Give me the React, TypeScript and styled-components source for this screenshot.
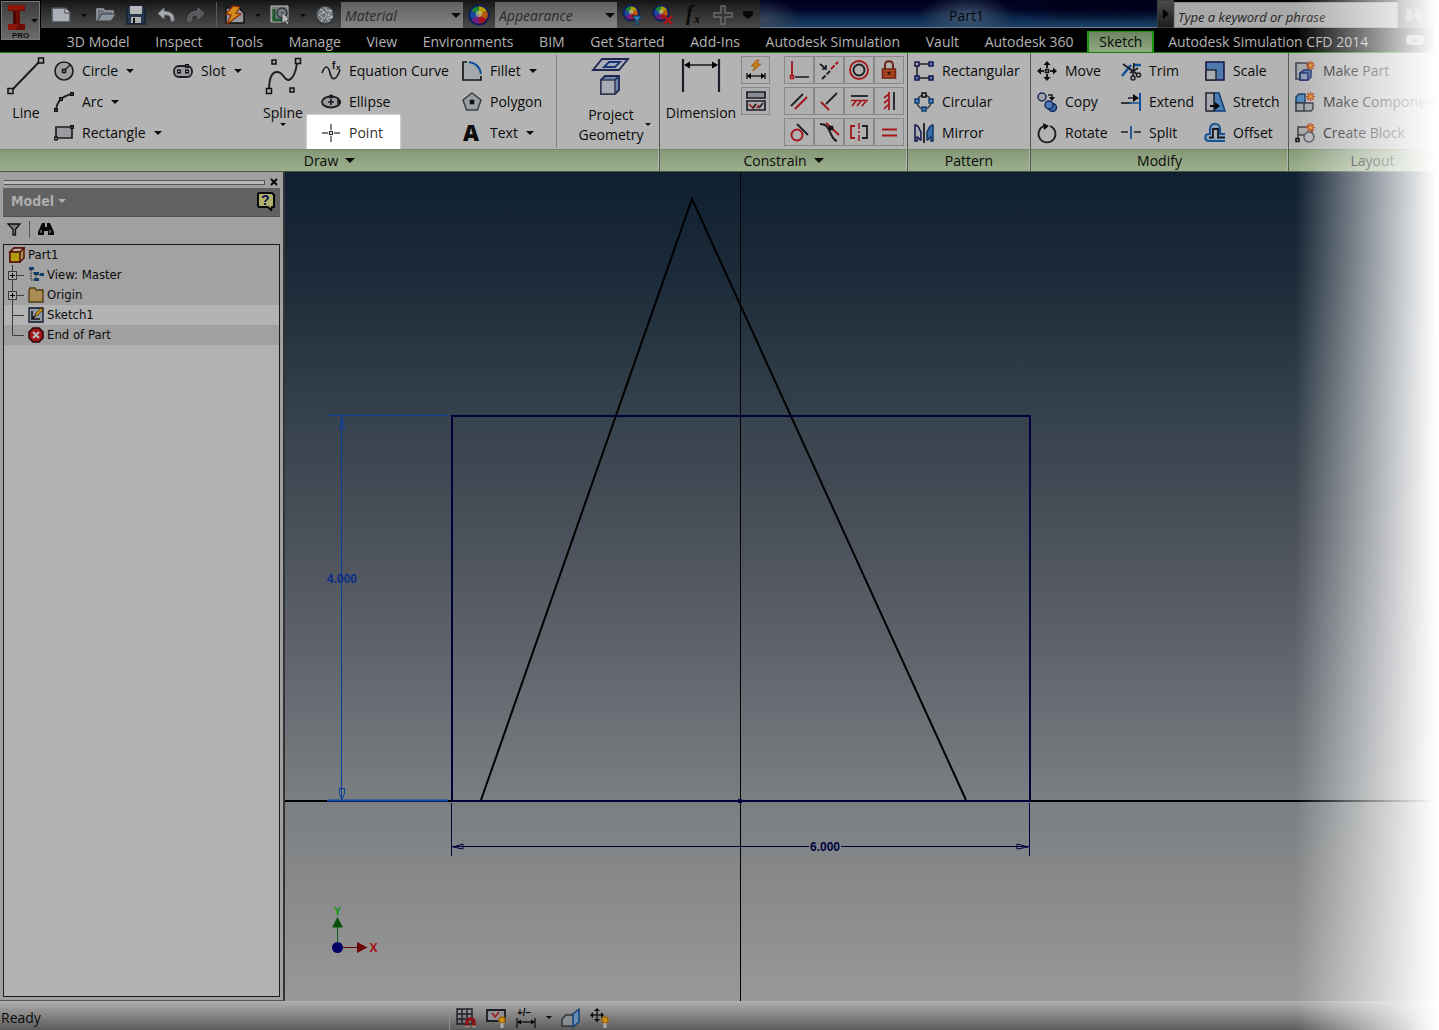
import React from 'react';
import styled, { createGlobalStyle, css } from 'styled-components';

const ui = '"Open Sans", "Noto Sans", sans-serif';
const treeFont = '"DejaVu Sans Condensed", "DejaVu Sans", sans-serif';

const c = {
  ink: '#0a0a0a',
  line: '#1c1f26',
  navy: '#14144a',
  blue: '#0f4f96',
  red: '#a3161a',
  ribbon: '#b3b3b3',
};

const Global = createGlobalStyle`
  *, *::before, *::after { box-sizing: border-box; }
  body { margin: 0; background: #fff; font-family: ${ui}; font-size: 14px; color: ${c.ink}; overflow: hidden; }
  button, input, select { font: inherit; color: inherit; margin: 0; }
  button { padding: 0; border: 0; background: none; }
  svg { display: block; flex: none; }
`;

const Shell = styled.div`
  position: relative;
  display: flex;
  flex-direction: column;
  height: 100vh;
  overflow: hidden;
`;

const EdgeFade = styled.div`
  position: absolute;
  inset: 0 0 0 auto;
  width: 144px;
  background: linear-gradient(to right, rgba(255, 255, 255, 0), #fff 98%);
  pointer-events: none;
`;

/* ---------- title bar and tabs ---------- */

const Header = styled.header`
  flex: none;
  display: grid;
  grid-template-columns: 41px minmax(0, 1fr);
  grid-template-rows: 29px 23px;
  background: #000;
  border-bottom: 1px solid #157a06;
`;

const AppButton = styled.button`
  grid-row: 1 / 3;
  width: 39px;
  height: 39px;
  margin: 1px;
  display: flex;
  align-items: center;
  border: 1px solid #777;
  background: linear-gradient(#3c3c3c, #6c6c6c);
`;

const TitleRow = styled.div`
  display: flex;
  min-width: 0;
  height: 28px;
`;

const QuickBar = styled.div`
  flex: none;
  display: flex;
  align-items: center;
  gap: 10px;
  padding: 2px 7px 0 10px;
  background: linear-gradient(#141414, #2b2b2b 35%, #494949);
`;

const QuickButton = styled.button`
  display: flex;
  align-items: center;
  justify-content: center;
  width: 20px;
  height: 24px;
`;

const CaretButton = styled.button`
  display: flex;
  align-items: center;
  justify-content: center;
  width: 25px;
  height: 24px;
  margin: 0 -10px;
`;

const MoreButton = styled(QuickButton)`
  width: 10px;
`;

const QuickRule = styled.span`
  width: 1px;
  height: 26px;
  margin-right: -2px;
  background: #5a5a5a;
`;

const StyleSelect = styled.span`
  display: flex;
  align-items: center;
  width: 122px;
  height: 26px;
  margin: 0 -4px;
  padding-right: 2px;
  background: linear-gradient(#606060, #858585);

  select {
    flex: 1;
    min-width: 0;
    height: 26px;
    padding: 0 4px;
    border: 0;
    background: none;
    appearance: none;
    font-style: italic;
    color: #2b2b2b;
  }
`;

const TitleArea = styled.div`
  flex: 1;
  min-width: 0;
  display: flex;
  align-items: center;
  justify-content: center;
  padding: 3px 0 0 16px;
  border-bottom: 1px solid #6d7f92;
  color: #05070b;
  background:
    radial-gradient(ellipse 48px 22px at 52% 60%, rgba(70, 95, 118, 0.85), rgba(70, 95, 118, 0)),
    radial-gradient(ellipse 36px 22px at 1% 75%, rgba(62, 72, 90, 0.9), rgba(62, 72, 90, 0)),
    radial-gradient(ellipse 110px 18px at 86% 20%, rgba(0, 0, 24, 0.9), rgba(0, 0, 24, 0)),
    linear-gradient(#00001c, #010528 35%, #0a2347 62%, #1c4166);
`;

const SearchToggle = styled.button`
  width: 17px;
  height: 28px;
  display: flex;
  align-items: center;
  justify-content: center;
  border: 1px solid #3d3d3d;
  background: linear-gradient(#4a4a4a, #1d1d1d);
`;

const SearchBox = styled.input`
  width: 224px;
  height: 26px;
  margin-top: 2px;
  padding: 3px 3px 0;
  border: 1px solid #8b8b8b;
  border-radius: 0;
  background: #a9a9a9;
  font-size: 13px;
  font-style: italic;

  &::placeholder { color: #222; opacity: 1; }
`;

const SearchButton = styled.button`
  width: 41px;
  height: 28px;
  display: flex;
  align-items: center;
  padding-left: 6px;
  background: #444;
`;

const TabRow = styled.nav`
  display: flex;
  justify-content: space-between;
  height: 23px;
  padding: 2px 15px 0 13px;
`;

const Tabs = styled.div`
  flex: 1 1 0;
  min-width: 0;
  max-width: 1327px;
  display: flex;
`;

const Tab = styled.button<{ $active?: boolean }>`
  flex: 1 0 auto;
  height: 21px;
  padding: 0 12px;
  line-height: 20px;
  white-space: nowrap;
  color: #b3b3b3;
  ${(p) => p.$active && css`
    margin: 0 1px;
    padding: 0 9px;
    line-height: 18px;
    color: #080808;
    border: 1px solid #13980a;
    border-width: 1px 2px 0;
    background: linear-gradient(#6b8560, #93ab84);
  `}
`;

const RibbonToggle = styled.button`
  margin-top: 4px;
  width: 18px;
  height: 10px;
  display: flex;
  align-items: center;
  justify-content: center;
  border-radius: 4px;
  background: #9b9b9b;
`;

/* ---------- ribbon ---------- */

const Ribbon = styled.div`
  flex: none;
  display: flex;
  height: 119px;
  overflow: hidden;
  background: ${c.ribbon};
  border-bottom: 1px solid #4b5544;
`;

const Panel = styled.section<{ $w?: number }>`
  flex: ${(p) => (p.$w ? `0 0 ${p.$w}px` : '1 0 168px')};
  display: flex;
  flex-direction: column;
  border-right: 1px solid #525c4c;
`;

const PanelBody = styled.div<{ $cols: string }>`
  display: grid;
  grid-template-columns: ${(p) => p.$cols};
  height: 96px;
  padding: 2px 0 0 6px;
`;

const PanelTitle = styled.h2`
  display: flex;
  align-items: center;
  justify-content: center;
  gap: 7px;
  height: 22px;
  margin: 0 1px 0 0;
  padding-left: 1px;
  border-top: 1px solid #78896c;
  background: linear-gradient(#859978, #9cb08d);
  font-size: 14px;
  font-weight: 400;
  line-height: 20px;
`;

const ToolColumn = styled.div`
  display: flex;
  flex-direction: column;
  align-items: flex-start;
  min-width: 0;
`;

const Tool = styled.button<{ $lit?: boolean }>`
  flex: none;
  display: flex;
  align-items: center;
  gap: 8px;
  height: 31px;
  line-height: 20px;
  white-space: nowrap;
  ${(p) => p.$lit && css`
    height: 35px;
    margin: -2px 0 0 -14px;
    padding: 2px 17px 2px 14px;
    background: #fff;
    box-shadow: 0 0 2px #fff;
    color: #303030;
  `}
`;

const BigTool = styled.button<{ $after?: number }>`
  position: relative;
  display: flex;
  flex-direction: column;
  align-items: center;
  height: 93px;
  margin-right: ${(p) => p.$after ?? 0}px;
  padding-top: 2px;
  line-height: 20px;
  white-space: pre;

  > span { margin-top: 8px; }
`;

const GeometryTool = styled(BigTool)`
  border-left: 1px solid #858585;
  padding-left: 6px;

  > svg:last-child { position: absolute; right: 8px; top: 68px; }
`;

const SideColumn = styled.div`
  display: flex;
  flex-direction: column;
  gap: 3px;
  padding-top: 1px;
`;

const Constraints = styled.div`
  display: grid;
  grid-template-columns: repeat(4, 30px);
  grid-auto-rows: 28px;
  row-gap: 3px;
  padding-top: 1px;
`;

const Cell = styled.button`
  display: flex;
  align-items: center;
  justify-content: center;
  height: 28px;
  width: 29px;
  border: 1px solid #888;
  background: #b0b0b0;
  ${Constraints} & { width: 30px; }
`;

/* ---------- work area ---------- */

const Work = styled.main`
  flex: 1;
  min-height: 0;
  display: flex;
`;

const Browser = styled.aside`
  flex: 0 0 285px;
  display: flex;
  flex-direction: column;
  padding: 4px 3px 3px;
  border-right: 2px solid #333;
  border-bottom: 1px solid #555;
  background: #a0a0a0;
  font-family: ${treeFont};
  font-size: 13px;
`;

const Grip = styled.div`
  display: flex;
  align-items: center;
  gap: 5px;
  height: 12px;

  > span {
    flex: 1;
    height: 5px;
    margin-left: 1px;
    border: solid #555;
    border-width: 1px 1px 1px 0;
    background: #b7b7b7;
  }
`;

const CloseButton = styled.button`
  width: 9px;
  height: 9px;
  margin-right: 1px;
`;

const BrowserHead = styled.div`
  display: flex;
  align-items: center;
  justify-content: space-between;
  height: 29px;
  padding: 0 5px 2px 8px;
  background: #616161;
  border-bottom: 1px solid #4f4f4f;
`;

const ModelMenu = styled.button`
  display: flex;
  align-items: center;
  gap: 4px;
  font-size: 14px;
  font-weight: 700;
  color: #aeaeae;
`;

const BrowserTools = styled.div`
  display: flex;
  align-items: center;
  gap: 8px;
  height: 27px;
  padding: 0 4px 3px;

  > span { width: 1px; height: 17px; background: #555; }
`;

const Tree = styled.ul`
  flex: 1;
  margin: 0;
  padding: 0;
  list-style: none;
  border: 1px solid #1a1a1a;
  background: #b1b1b1;
`;

const Row = styled.li<{ $tone: string; $root?: boolean }>`
  display: flex;
  align-items: center;
  gap: 3px;
  height: 20px;
  padding-left: ${(p) => (p.$root ? 5 : 3)}px;
  line-height: 20px;
  background: ${(p) => p.$tone};
`;

const Canvas = styled.div`
  flex: 1;
  min-width: 0;
  background: linear-gradient(#0f2031, #1b2a38 12%, #33404b 28%, #4b515a 44%, #62676f 60%, #7a7f82 76%, #8b8b8c 88%, #989897);

  > svg { width: 100%; height: 100%; }
`;

const StatusBar = styled.footer`
  flex: none;
  display: flex;
  align-items: center;
  height: 29px;
  padding-top: 3px;
  border-top: 1px solid #b0b0b0;
  background: linear-gradient(#ababab, #5b5b5b);
`;

const Ready = styled.span`
  width: 449px;
  padding-left: 1px;
`;

const StatusTools = styled.div`
  display: flex;
  align-items: center;
  gap: 10px;
  padding-left: 6px;
  border-left: 1px solid #8c8c8c;
`;

/* ---------- icons ---------- */

type G = { children: React.ReactNode; s?: number; h?: number };
const Svg = ({ children, s = 20, h }: G) => (
  <svg width={s} height={h ?? s} viewBox={`0 0 ${s} ${h ?? s}`} overflow="visible" fill="none" stroke={c.line} strokeWidth="1.5" aria-hidden="true">
    {children}
  </svg>
);

const Down = ({ w = 8, fill = '#0b0b0b' }: { w?: number; fill?: string }) => (
  <svg width={w} height={Math.round(w / 2)} viewBox="0 0 8 4" preserveAspectRatio="none" aria-hidden="true">
    <path d="M0 0h8L4 4z" fill={fill} />
  </svg>
);

const Node = ({ x, y, fill = '#aaa', s = 4, stroke = '#101014' }: { x: number; y: number; fill?: string; s?: number; stroke?: string }) => (
  <rect x={x - s / 2} y={y - s / 2} width={s} height={s} fill={fill} stroke={stroke} strokeWidth="1.5" />
);

const Wheel = ({ x = 10, y = 10, r = 8 }) => {
  const hues = ['#b59a00', '#b8590a', '#a3141c', '#6e1f86', '#1b47a0', '#1c8430'];
  const at = (a: number) => `${x + r * Math.cos(a)} ${y + r * Math.sin(a)}`;
  return (
    <g stroke="none">
      {hues.map((h, i) => (
        <path key={h} fill={h} d={`M${x} ${y}L${at((i * Math.PI) / 3 - 1.57)}A${r} ${r} 0 0 1 ${at(((i + 1) * Math.PI) / 3 - 1.57)}z`} />
      ))}
      <circle cx={x} cy={y} r={r + 0.7} fill="none" stroke="#0c1e5c" strokeWidth="1.8" />
      <circle cx={x} cy={y - 1} r={r * 0.35} fill="#c9c69a" opacity=".6" />
    </g>
  );
};

const Spark = () => (
  <g stroke="#b8400e" strokeWidth="1.600">
    <path d="M15.500 0v9M11 4.500h9M12.300 1.300l6.400 6.400M18.700 1.300l-6.400 6.400" />
    <circle cx="15.500" cy="4.500" r="1.700" fill="#e0a23c" stroke="#c86a16" strokeWidth="1" />
  </g>
);

const Logo = () => (
  <svg width="37" height="37" viewBox="0 0 37 37" aria-hidden="true">
    <path d="M6 3h17v6h-5v13h5v6H6v-6h5V9H6z" fill="#6a0d05" />
    <path d="M6 3h17l-2 5H6z" fill="#8c1609" />
    <path d="M11 9h3v13h-3z" fill="#4c0703" />
    <path d="M6 22h10l-3 6H6z" fill="#8c1609" />
    <text x="10" y="36" fontFamily="Liberation Sans" fontWeight="700" fontSize="8" fill="#101010">PRO</text>
    <path d="M29 17h7l-3.500 3.500z" fill="#050505" />
  </svg>
);

const I: Record<string, React.ReactNode> = {
  newFile: <Svg><path d="M1 3h13l5 5v9H1z" fill="#aab0b6" stroke="#4a4e54" /><path d="M14 3v5h5" fill="#d0d0d0" stroke="#666" /></Svg>,
  open: <Svg><path d="M1 16V4h6l2 2h8v3" fill="#6a7280" stroke="#9aa0a8" /><path d="M1 16l5-7h14l-5 7z" fill="#8b929b" stroke="#3a3e46" strokeWidth="1" /></Svg>,
  save: <Svg><path d="M1 1h18v18H1z" fill="#27384f" stroke="#18202c" /><path d="M4 1h12v8H4z" fill="#b7b7b7" stroke="none" /><path d="M5 12h10v6H5z" fill="#b0b0b0" stroke="none" /><path d="M7 13h2v5H7z" fill="#111" stroke="none" /></Svg>,
  undo: <Svg><path d="M8 3L2 8.500 8 14v-4c5-.5 7 1 7 6h3c.5-7-3-9.500-10-9.500z" fill="#a8acb2" stroke="#7b7f85" strokeWidth="1" /></Svg>,
  redo: <Svg><path d="M12 3l6 5.500L12 14v-4c-5-.5-7 1-7 6H2C1.500 9 5 6.500 12 6.500z" fill="#55585c" stroke="#6c6f73" strokeWidth="1" /></Svg>,
  update: <Svg><path d="M1 3h13l5 5v10H1z" fill="#94989c" stroke="#111" /><path d="M8 1L1 9l5 1-4 9L16 9l-5-1 4-6z" fill="#d08a1a" stroke="#8c2a08" strokeWidth="1.200" /></Svg>,
  pick: <Svg><path d="M1 1h17v16H1z" fill="#777c80" stroke="#bbb" strokeWidth="1" /><path d="M4 4v11h9" stroke="#1b5a28" strokeWidth="3" /><circle cx="12" cy="8" r="5" stroke="#2d3540" /><path d="M12 7v12l3-3 2 4 2-1-2-4h3z" fill="#bbb" stroke="#222" strokeWidth=".8" /></Svg>,
  sphere: <Svg><circle cx="10" cy="10" r="9" fill="#6f7478" stroke="#31363a" /><path d="M5 4l4 3-5 3 4 3-2 4M10 2l2 4 5-1-4 5 5 2-6 1 2 4M9 7l3 3-3 4" stroke="#babec0" strokeWidth="1" /></Svg>,
  wheel: <Svg><Wheel r={9} /></Svg>,
  wheelDown: <Svg><Wheel x={8} y={8} r={7} /><path d="M9 11h10l-4 4v5h-2v-5z" fill="#2c81b8" stroke="#0d3558" strokeWidth="1" /></Svg>,
  wheelX: <Svg><Wheel x={8} y={8} r={7} /><path d="M11 11l8 8M19 11l-8 8" stroke="#ab1717" strokeWidth="2.400" /></Svg>,
  fx: <Svg><text x="3" y="15" fontFamily="Liberation Serif" fontStyle="italic" fontWeight="700" fontSize="20" fill="#080808" stroke="none">f</text><text x="11" y="18" fontFamily="Liberation Serif" fontStyle="italic" fontWeight="700" fontSize="12" fill="#080808" stroke="none">x</text></Svg>,
  plus: <Svg><path d="M8 1h4v7h7v4h-7v7H8v-7H1V8h7z" stroke="#6b6b6b" fill="#333" /></Svg>,
  more: <Svg s={10} h={10}><path d="M0 1h10v4L5 9 0 5z" fill="#070707" stroke="none" /></Svg>,
  binoc: <Svg><path d="M3 5h5v5h3V5h5l3 12h-7v-4H8v4H1z" fill="#888" stroke="#666" /></Svg>,

  line: <Svg s={38}><path d="M5 33L33 4" strokeWidth="2" /><Node x={3.500} y={34} s={5} /><Node x={34} y={3.500} s={5} /></Svg>,
  circle: <Svg><circle cx="10" cy="10" r="9" fill="#a0a0a0" strokeWidth="1.700" /><path d="M10 10l6-6" strokeWidth="1.200" /><Node x={10} y={10} s={3} /></Svg>,
  arc: <Svg><path d="M2 18C3 9 8 4 18 2" strokeWidth="1.800" /><Node x={2} y={18} s={2.500} /><Node x={7} y={7} s={2.500} /><Node x={18} y={2} s={2.500} /></Svg>,
  rect: <Svg><path d="M2 4h16v11H2z" fill="#999b9f" strokeWidth="1.700" /><Node x={2} y={15.500} s={2.500} /><Node x={18} y={4} s={2.500} /></Svg>,
  slot: <Svg><rect x="1" y="5" width="18" height="11" rx="5" fill="#999b9f" strokeWidth="1.800" /><Node x={6} y={10.500} s={2.500} /><Node x={14} y={10.500} s={2.500} /><Node x={14} y={5} s={2.500} /></Svg>,
  spline: <Svg s={38}><path d="M5 34C5 24 7 15 13 15c7 0 7 9 12 8 5-2 7-9 8-17" strokeWidth="2" /><Node x={5} y={34} s={5} /><Node x={10} y={5} s={4} /><Node x={28} y={33} s={4} /><Node x={34} y={4} s={5} /></Svg>,
  equation: <Svg><path d="M1 12c3-8 6-8 8 0s6 8 10-3" strokeWidth="1.700" /><text x="11" y="8" fontFamily="Liberation Sans" fontWeight="700" fontSize="10" fill="#111" stroke="none">f</text><text x="15" y="9" fontFamily="Liberation Sans" fontWeight="700" fontSize="8" fill="#111" stroke="none">x</text></Svg>,
  ellipse: <Svg><ellipse cx="10" cy="10" rx="9" ry="5.500" fill="#a0a0a0" strokeWidth="1.900" /><path d="M10 7v6M7 10h6" strokeWidth="1.700" /><Node x={10} y={4.500} s={2} /><Node x={18} y={10} s={2} /></Svg>,
  point: <Svg><path d="M10 1v6M10 13v6M1 10h6M13 10h6" stroke="#555" strokeWidth="1.400" /><rect x="8.500" y="8.500" width="3" height="3" stroke="#333" strokeWidth="1.200" /></Svg>,
  fillet: <Svg><path d="M1 1h6c8 1 11 5 12 12v6H1z" fill="#a5a9ae" stroke="none" /><path d="M5 1H1v18h18v-4" stroke="#15171c" strokeWidth="1.700" /><path d="M7 1c7 1 11 5 12 12" stroke="#0d4f9a" strokeWidth="2" /></Svg>,
  polygon: <Svg><path d="M10 1l9 7-3.500 10h-11L1 8z" fill="#9b9ea2" stroke="#3d4046" /><Node x={10} y={10} s={3} fill="#111" /></Svg>,
  text: <Svg><text x="1" y="18" fontFamily="Open Sans" fontWeight="800" fontSize="22" fill="#0c0c0c" stroke="none">A</text></Svg>,
  project: <Svg s={40}><path d="M11 2h26l-9 11H2z" fill="#a9adb5" stroke="#1e2552" strokeWidth="1.800" /><path d="M18 5h11l-5 5H13z" fill="#a3acbd" stroke="#1c3272" strokeWidth="1.800" /><path d="M10 23l4-4h14v14l-4 4H10z" fill="#6f87ab" stroke="#1e2552" strokeWidth="1.800" /><path d="M10 23h14v14H10z" fill="#a9adb3" stroke="#333b55" /><path d="M24 23l4-4" stroke="#1e2552" /></Svg>,

  dimension: <Svg s={40} h={38}><path d="M2 2v33M38 2v33" stroke="#1b2028" strokeWidth="2.200" /><path d="M4 8h32" strokeWidth="1.600" /><path d="M3 8l6-3.500v7zM37 8l-6-3.500v7z" fill="#000" stroke="none" /></Svg>,
  autoDim: <Svg><path d="M11 0L5 6h4l-2 5 8-7h-4l2-4z" fill="#c98312" stroke="#a44b07" strokeWidth=".8" /><path d="M1 13v6M19 13v6M2 16h16" /><path d="M1 16l4-3v6zM19 16l-4-3v6z" fill="#000" stroke="none" /></Svg>,
  showCon: <Svg><path d="M1 1h18v6H1z" fill="#888d93" strokeWidth="1.700" /><path d="M1 10h18v9H1z" fill="#a9a9a9" strokeWidth="1.700" /><path d="M3 13l4 4 3-4" stroke={c.red} /><path d="M7 17l3-4M13 17l4-5" strokeWidth="1.600" /><path d="M11 17l2-3" stroke={c.red} /></Svg>,
  coincident: <Svg><path d="M3 1v14" stroke={c.red} strokeWidth="1.800" /><path d="M6 17h14" strokeWidth="1.600" /><rect x="1.500" y="15.500" width="3" height="3" stroke={c.red} fill="#c88" /></Svg>,
  collinear: <Svg><path d="M3 19l8-8" strokeWidth="2" strokeDasharray="5 1.500" /><path d="M12 9l7-7" stroke={c.red} strokeWidth="2" strokeDasharray="5 1.500" /><path d="M1 4l6 5M7 5v4H3" strokeWidth="1.700" /></Svg>,
  concentric: <Svg><circle cx="10" cy="10" r="9" stroke={c.red} strokeWidth="1.900" /><circle cx="10" cy="10" r="5.500" strokeWidth="1.900" /></Svg>,
  lock: <Svg><path d="M6 9V5c0-5 8-5 8 0v4" stroke="#6c2414" strokeWidth="2" /><path d="M3.500 9h13v9h-13z" fill="#b14d28" stroke="#70210e" /><path d="M4 12h12M4 15h12" stroke="#7d2c13" strokeWidth="1" /><circle cx="10" cy="13" r="1.500" fill="#3a0d04" stroke="none" /></Svg>,
  parallel: <Svg><path d="M2 15L14 3" strokeWidth="1.800" /><path d="M6 18L18 6" stroke={c.red} strokeWidth="2" /></Svg>,
  perp: <Svg><path d="M7 13L18 2" strokeWidth="1.800" /><path d="M2 11l8 8" stroke={c.red} strokeWidth="2" /></Svg>,
  horizontal: <Svg><path d="M2 5h17" strokeWidth="1.800" /><path d="M2 9.500h17M7 10l-4 5M12 10l-4 5M17 10l-4 5" stroke={c.red} strokeWidth="1.700" /></Svg>,
  vertical: <Svg><path d="M15 1v18" strokeWidth="1.800" /><path d="M10 1v18M10 3l-5 4M10 8l-5 4M10 13l-5 5" stroke={c.red} strokeWidth="1.700" /></Svg>,
  tangent: <Svg><circle cx="8" cy="13" r="5.500" stroke={c.red} strokeWidth="2" /><path d="M8 2l11 11" strokeWidth="1.800" /></Svg>,
  smooth: <Svg><path d="M1 2c7 0 8 4 10 8s3 8 7 9" strokeWidth="2" /><path d="M7 1l13 12" stroke={c.red} strokeWidth="2" /><Node x={12} y={6} s={3} fill="#222" /></Svg>,
  symmetric: <Svg><path d="M6 4H2v12h4" stroke={c.red} strokeWidth="1.800" /><path d="M13 4h5v12h-5" strokeWidth="1.800" /><path d="M10 1v18" stroke={c.red} strokeDasharray="6 2 2 2" /></Svg>,
  equal: <Svg><path d="M3 7.500h15M3 13.500h15" stroke={c.red} strokeWidth="1.800" /></Svg>,

  rectangular: <Svg><path d="M3 3h14M3 3v14h14" /><Node x={3} y={3} s={4} stroke={c.navy} />{[[17, 3], [3, 17], [17, 17]].map(([x, y]) => <Node key={`${x}-${y}`} x={x} y={y} s={4} stroke={c.navy} fill="#547db1" />)}</Svg>,
  circular: <Svg><circle cx="10" cy="10" r="7" strokeWidth="1.200" /><Node x={10} y={3} s={4} />{[[3, 9], [17, 9], [10, 17]].map(([x, y]) => <Node key={`${x}-${y}`} x={x} y={y} s={4} stroke="#153f73" fill="#4a80b8" />)}</Svg>,
  mirror: <Svg><path d="M1 18V2c4 0 4 4 6 7v8c-2 0-2-3-4-3v4z" fill="#a9abb0" stroke={c.navy} /><path d="M19 18V2c-4 0-4 4-6 7v8c2 0 2-3 4-3v4z" fill="#346eae" stroke="#153564" /><path d="M10 0v20" stroke="#08080c" strokeWidth="1.600" /></Svg>,
  move: <Svg><path d="M10 2v5M10 13v5M2 10h5M13 10h5" strokeWidth="2" /><path d="M10 0l3.500 4h-7zM10 20l3.500-4h-7zM0 10l4-3.500v7zM20 10l-4-3.500v7z" fill="#0b0b0b" stroke="none" /><Node x={10} y={10} s={3} /></Svg>,
  copy: <Svg><circle cx="5" cy="5" r="4" fill="#a0a4aa" stroke="#1b2857" /><circle cx="15.500" cy="15.500" r="4" fill="#3e6cab" stroke="#142860" /><circle cx="12" cy="13" r="4" fill="#4f7db8" stroke="#142860" /><path d="M11 3h4v3" /><path d="M12 5h6l-3 4z" fill="#0a0a0a" stroke="none" /></Svg>,
  rotate: <Svg><path d="M13 3a8.500 8.500 0 1 1-6 0" strokeWidth="1.800" /><path d="M6 0l6 3-5 4z" fill="#090909" stroke="none" /></Svg>,
  trim: <Svg><path d="M1 15L10 4M13 4h7" stroke={c.blue} strokeWidth="2.400" /><path d="M2 3l14 10M17 7L9 12" strokeWidth="1.900" /><circle cx="17.500" cy="14" r="2" /><circle cx="12" cy="17" r="2" /><path d="M12 15l1-13" stroke={c.line} strokeWidth="1.700" /></Svg>,
  extend: <Svg><path d="M0 11h10" strokeWidth="1.700" /><path d="M8 11h10" stroke={c.blue} /><path d="M19 1v18" stroke={c.blue} strokeWidth="2" /><path d="M7 6h6" /><path d="M12 2l6 4-6 4z" fill="#0a0a0a" stroke="none" /></Svg>,
  split: <Svg><path d="M0 9h7M13 9h7" strokeWidth="1.700" /><path d="M10 3v13" stroke={c.blue} strokeWidth="1.700" /></Svg>,
  scale: <Svg><path d="M1 1h18v18H1z" fill="#4f78ac" stroke={c.navy} /><path d="M1 9h10v10H1z" fill="#aaadb2" stroke="#23272f" /></Svg>,
  stretch: <Svg><path d="M9 1h5l6 18H9z" fill="#4a7fb8" stroke="#153f78" /><path d="M1 1h8v18H1z" fill="#a4a8ae" stroke="#20242c" /><path d="M5 14h6" stroke="#060606" strokeWidth="2" /><path d="M10 10l5 4-5 4z" fill="#060606" stroke="none" /></Svg>,
  offset: <Svg><path d="M20 18H4c-5 0-5-7 0-7h1V6c0-7 10-7 10 0v5h5" stroke="#1a5592" strokeWidth="2.200" fill="#8fa4bd" /><path d="M20 14.500h-7V6H8v8.500H4" stroke="#16181e" strokeWidth="1.800" fill="#b0b0b0" /></Svg>,
  part: <Svg><path d="M1 2h12v16H1z" fill="#a2a4a8" stroke="#3b3e48" /><path d="M5 12l4-3h7v7l-3 3H5z" fill="#56749e" stroke="#1b2c68" /><path d="M5 12h8v7H5z" fill="#8798b4" stroke="#1b2c68" /><Spark /></Svg>,
  component: <Svg><path d="M1 5l3-3h6v9H1z" fill="#4b88b6" stroke="#1d3a5c" /><path d="M1 11h8v8H1zM9 11h9v6l-2 2H9z" fill="#9ea1a6" stroke="#31353f" /><Spark /></Svg>,
  block: <Svg><path d="M3 4h14v8H3zM3 12v5" stroke="#383b42" fill="#a6a6a6" /><Node x={2.500} y={17} s={3} /><circle cx="14" cy="14" r="5" fill="#aeb0b3" stroke="#4b4e55" /><Spark /></Svg>,

  help: <Svg s={18}><path d="M2 1h13l2 2v12h-2l-1 3-3-3H2L1 14V2z" fill="#b3b169" stroke="#080808" strokeWidth="2" /><text x="4" y="13" fontFamily="Liberation Sans" fontWeight="700" fontSize="14" fill="#0a0a55" stroke="none">?</text></Svg>,
  filter: <Svg s={14}><path d="M1 2h12L8.500 7.500V13H6V7.500z" fill="#777" stroke="#111" strokeWidth="1.300" /></Svg>,
  find: <Svg s={16}><path d="M4 2h3v4h2V2h3l4 9v3h-6v-4H6v4H0v-3z" fill="#080808" stroke="none" /><path d="M3 9v3M12 9v3" stroke="#aaa" strokeWidth="1" /></Svg>,
  cube: <Svg s={16}><path d="M1 5l4-4h10v10l-4 4H1z" fill="#a6964d" stroke="#571009" /><path d="M5 1h10l-4 4H1z" fill="#b5b09a" stroke="#571009" /><path d="M1 5h10v10H1z" fill="#b49a11" stroke="#571009" /></Svg>,
  view: <Svg s={16}><path d="M3 3v10h3M5 6h3v7h3M11 8h4" strokeDasharray="1.500 1" strokeWidth="1" /><path d="M1 0h5v3H1zM6 5h5v3H6zM12 6h4v3h-4zM6 11h5v3H6z" fill="#123d69" stroke="none" /></Svg>,
  folder: <Svg s={16}><path d="M1 3l1-2h5l1 2h7v12H1z" fill="#a98c56" stroke="#513a12" strokeWidth="1.300" /></Svg>,
  sketch: <Svg s={16}><path d="M1 1h14v14H1z" fill="#909caa" stroke="#0e1424" strokeWidth="1.300" /><path d="M4 4v8h8M4 12l4-4" stroke="#111" strokeWidth="1.600" /><path d="M7 9l1-3 5-5 2 2-5 5z" fill="#c08a15" stroke="#5a3a08" strokeWidth=".8" /></Svg>,
  end: <Svg s={16}><path d="M5 1h6l4 4v6l-4 4H5l-4-4V5z" fill="#a3141c" stroke="#2b0506" /><path d="M5 5l6 6M11 5l-6 6" stroke="#b9b9b9" strokeWidth="2.200" /></Svg>,

  grid: <Svg><path d="M1 1h15v15H1zM6 1v15M11 1v15M1 6h15M1 11h15" strokeWidth="1.400" /><path d="M11 19v-5c0-4 7-4 7 0v5" stroke="#8d1515" strokeWidth="3.500" /><path d="M9 18.500h4M16 18.500h4" stroke="#999" /></Svg>,
  constraintLight: <Svg><path d="M1 2h18v11H1z" fill="#8f9195" strokeWidth="1.800" /><path d="M6 5l3 4 4-5" stroke={c.red} /><circle cx="16" cy="12" r="3" fill="#c49413" stroke="#a4620c" /><path d="M16 15v5" stroke="#aaa" strokeWidth="3" /></Svg>,
  tolerance: <Svg><text x="1" y="8" fontFamily="Liberation Sans" fontWeight="700" fontSize="10" fill="#0c0c0c" stroke="none">+/−</text><path d="M1 10v10M19 10v10M2 14h16" /><path d="M1 14l4-2.500v5zM19 14l-4-2.500v5z" fill="#000" stroke="none" /></Svg>,
  slice: <Svg><path d="M1 18V11l4-4h8v11z" fill="#8a8d92" stroke="#2e323a" /><path d="M12 19V6l6-5v13z" fill="#678cb4" stroke="#0f4478" /></Svg>,
  moveLight: <Svg><path d="M6 1v12M0 7h12" /><path d="M6 0l3 3H3zM6 14l3-3H3zM-1 7l3-3v6zM13 7l-3-3v6z" fill="#0a0a0a" stroke="none" /><circle cx="14" cy="12" r="3" fill="#c49413" stroke="#a4620c" /><path d="M14 15v5" stroke="#aaa" strokeWidth="3" /></Svg>,
};

const T = ({ icon, label, drop, lit }: { icon: string; label: string; drop?: boolean; lit?: boolean }) => (
  <Tool $lit={lit}>{I[icon]}{label}{drop && <Down />}</Tool>
);

const Quick = ({ icon, label }: { icon: string; label: string }) => (
  <QuickButton aria-label={label}>{I[icon]}</QuickButton>
);

const tabsBefore = ['3D Model', 'Inspect', 'Tools', 'Manage', 'View', 'Environments', 'BIM', 'Get Started', 'Add-Ins', 'Autodesk Simulation', 'Vault', 'Autodesk 360'];
const constraints = ['coincident', 'collinear', 'concentric', 'lock', 'parallel', 'perp', 'horizontal', 'vertical', 'tangent', 'smooth', 'symmetric', 'equal'];
const branches = [
  { label: 'View: Master', icon: 'view', tone: '#a2a2a2', plus: true },
  { label: 'Origin', icon: 'folder', tone: '#a2a2a2', plus: true },
  { label: 'Sketch1', icon: 'sketch', tone: '#b3b3b3' },
  { label: 'End of Part', icon: 'end', tone: '#a0a0a0', last: true },
];

const Branch = ({ plus, last }: { plus?: boolean; last?: boolean }) => (
  <svg width="18" height="20" viewBox="0 0 18 20" fill="none" stroke="#3c3c3c" aria-hidden="true">
    <path d={last ? 'M5.500 0v10.500H17' : 'M5.500 0v20M5.500 10.500H17'} />
    {plus && <><rect x="1.500" y="6.500" width="8" height="8" fill="#a8a8a8" /><path d="M3 10.500h5M5.500 8v5" stroke="#000" /></>}
  </svg>
);

const Drawing = () => (
  <svg role="img" aria-label="Part sketch">
    <path d="M0 629h5000" stroke="#000" strokeWidth="2" />
    <path d="M455.500 0v5000" stroke="#000" />
    <path d="M196 628L407 27l274 601" stroke="#000" strokeWidth="2" fill="none" />
    <path d="M167 244h578v385H167z" stroke="#00003c" strokeWidth="2" fill="none" />
    <path d="M453 627h4v4h-4z" fill="#00003c" />
    <g stroke="#0c3c9c" fill="none">
      <path d="M42 243.500h121M56.500 244v384" />
      <path d="M42 628.500h121" stroke="#1549a6" strokeWidth="2" />
      <path d="M57 245l-2.500 12h5zM54.500 616.500h5v5l-2.500 6-2.500-6z" />
    </g>
    <g stroke="#00003c" fill="none">
      <path d="M166.500 631v53M744.500 631v53M167 674.500h357M556 674.500h188" />
      <path d="M168 675l10-3v5zM743 675l-11-3v5z" />
    </g>
    <g fontFamily="Liberation Sans, sans-serif" fontSize="12" fontWeight="700" textAnchor="middle">
      <text x="57" y="411" fill="#0a2c86">4.000</text>
      <text x="540" y="679" fill="#00003f">6.000</text>
      <text x="52.500" y="743" fill="#0b9a12" fontSize="11">Y</text>
      <text x="88.500" y="780" fill="#a80f0f" fontSize="12">X</text>
    </g>
    <path d="M52.500 755v16" stroke="#0a5f10" />
    <path d="M52.500 745l5.500 10.500H47z" fill="#07500b" />
    <path d="M58 775.500h14" stroke="#6a0808" />
    <path d="M72 770l10.500 5.500L72 781z" fill="#6a0606" />
    <circle cx="52.500" cy="775.500" r="5.500" fill="#040468" />
  </svg>
);

export default function App() {
  return (
    <Shell>
      <Global />
      <Header>
        <AppButton aria-label="Application menu"><Logo /></AppButton>
        <TitleRow>
          <QuickBar>
            <Quick icon="newFile" label="New" />
            <CaretButton aria-label="New options"><Down w={6} fill="#080808" /></CaretButton>
            <Quick icon="open" label="Open" />
            <Quick icon="save" label="Save" />
            <Quick icon="undo" label="Undo" />
            <Quick icon="redo" label="Redo" />
            <QuickRule />
            <Quick icon="update" label="Update" />
            <CaretButton aria-label="Update options"><Down w={6} fill="#080808" /></CaretButton>
            <Quick icon="pick" label="Select" />
            <CaretButton aria-label="Select options"><Down w={6} fill="#080808" /></CaretButton>
            <Quick icon="sphere" label="Materials" />
            <StyleSelect>
              <select aria-label="Material"><option>Material</option></select>
              <Down w={10} />
            </StyleSelect>
            <Quick icon="wheel" label="Appearances" />
            <StyleSelect>
              <select aria-label="Appearance"><option>Appearance</option></select>
              <Down w={10} />
            </StyleSelect>
            <Quick icon="wheelDown" label="Adjust appearance" />
            <Quick icon="wheelX" label="Clear appearance" />
            <Quick icon="fx" label="Parameters" />
            <Quick icon="plus" label="Add" />
            <MoreButton aria-label="Customize">{I.more}</MoreButton>
          </QuickBar>
          <TitleArea>Part1</TitleArea>
          <SearchToggle aria-label="Toggle search">
            <Svg s={6} h={10}><path d="M0 0l6 5-6 5z" fill="#000" stroke="none" /></Svg>
          </SearchToggle>
          <SearchBox type="search" aria-label="Search" placeholder="Type a keyword or phrase" />
          <SearchButton aria-label="Find">{I.binoc}</SearchButton>
        </TitleRow>
        <TabRow>
          <Tabs>
            {tabsBefore.map((t) => <Tab key={t}>{t}</Tab>)}
            <Tab $active>Sketch</Tab>
            <Tab>Autodesk Simulation CFD 2014</Tab>
          </Tabs>
          <RibbonToggle aria-label="Minimize ribbon"><Svg s={8} h={4}><path d="M0 4h8L4 0z" fill="#444" stroke="none" /></Svg></RibbonToggle>
        </TabRow>
      </Header>

      <Ribbon>
        <Panel $w={660}>
          <PanelBody $cols="48px 119px 84px 64px 141px 94px minmax(0, 1fr)">
            <BigTool $after={8}>{I.line}<span>Line</span></BigTool>
            <ToolColumn>
              <T icon="circle" label="Circle" drop />
              <T icon="arc" label="Arc" drop />
              <T icon="rect" label="Rectangle" drop />
            </ToolColumn>
            <ToolColumn><T icon="slot" label="Slot" drop /></ToolColumn>
            <BigTool $after={12}>{I.spline}<span>Spline</span><Down w={6} /></BigTool>
            <ToolColumn>
              <T icon="equation" label="Equation Curve" />
              <T icon="ellipse" label="Ellipse" />
              <T icon="point" label="Point" lit />
            </ToolColumn>
            <ToolColumn>
              <T icon="fillet" label="Fillet" drop />
              <T icon="polygon" label="Polygon" />
              <T icon="text" label="Text" drop />
            </ToolColumn>
            <GeometryTool>{I.project}<span>{'Project\nGeometry'}</span><Down w={6} /></GeometryTool>
          </PanelBody>
          <PanelTitle>Draw <Down w={10} /></PanelTitle>
        </Panel>

        <Panel $w={248}>
          <PanelBody $cols="70px 5px 43px 120px">
            <BigTool>{I.dimension}<span>Dimension</span></BigTool>
            <span />
            <SideColumn>
              <Cell aria-label="Automatic dimensions">{I.autoDim}</Cell>
              <Cell aria-label="Show constraints">{I.showCon}</Cell>
            </SideColumn>
            <Constraints>
              {constraints.map((k) => <Cell key={k} aria-label={k}>{I[k]}</Cell>)}
            </Constraints>
          </PanelBody>
          <PanelTitle>Constrain <Down w={10} /></PanelTitle>
        </Panel>

        <Panel $w={123}>
          <PanelBody $cols="1fr">
            <ToolColumn>
              <T icon="rectangular" label="Rectangular" />
              <T icon="circular" label="Circular" />
              <T icon="mirror" label="Mirror" />
            </ToolColumn>
          </PanelBody>
          <PanelTitle>Pattern</PanelTitle>
        </Panel>

        <Panel $w={258}>
          <PanelBody $cols="84px 84px 1fr">
            <ToolColumn>
              <T icon="move" label="Move" />
              <T icon="copy" label="Copy" />
              <T icon="rotate" label="Rotate" />
            </ToolColumn>
            <ToolColumn>
              <T icon="trim" label="Trim" />
              <T icon="extend" label="Extend" />
              <T icon="split" label="Split" />
            </ToolColumn>
            <ToolColumn>
              <T icon="scale" label="Scale" />
              <T icon="stretch" label="Stretch" />
              <T icon="offset" label="Offset" />
            </ToolColumn>
          </PanelBody>
          <PanelTitle>Modify</PanelTitle>
        </Panel>

        <Panel>
          <PanelBody $cols="1fr">
            <ToolColumn>
              <T icon="part" label="Make Part" />
              <T icon="component" label="Make Components" />
              <T icon="block" label="Create Block" />
            </ToolColumn>
          </PanelBody>
          <PanelTitle>Layout</PanelTitle>
        </Panel>
      </Ribbon>

      <Work>
        <Browser>
          <Grip>
            <span />
            <CloseButton aria-label="Close browser"><Svg s={8}><path d="M1 1l6 6M7 1L1 7" stroke="#000" strokeWidth="1.800" /></Svg></CloseButton>
          </Grip>
          <BrowserHead>
            <ModelMenu>Model <Down w={8} fill="#aeaeae" /></ModelMenu>
            <button aria-label="Help">{I.help}</button>
          </BrowserHead>
          <BrowserTools>
            <button aria-label="Filter">{I.filter}</button>
            <span />
            <button aria-label="Find in browser">{I.find}</button>
          </BrowserTools>
          <Tree>
            <Row $tone="#a2a2a2" $root>{I.cube}Part1</Row>
            {branches.map((b) => (
              <Row key={b.label} $tone={b.tone}><Branch plus={b.plus} last={b.last} />{I[b.icon]}{b.label}</Row>
            ))}
          </Tree>
        </Browser>
        <Canvas><Drawing /></Canvas>
      </Work>

      <StatusBar>
        <Ready>Ready</Ready>
        <StatusTools>
          <Quick icon="grid" label="Snap to grid" />
          <Quick icon="constraintLight" label="Show all constraints" />
          <Quick icon="tolerance" label="Dimension display" />
          <CaretButton aria-label="Dimension display options"><Down w={6} /></CaretButton>
          <Quick icon="slice" label="Slice graphics" />
          <Quick icon="moveLight" label="Relax mode" />
        </StatusTools>
      </StatusBar>
      <EdgeFade />
    </Shell>
  );
}
